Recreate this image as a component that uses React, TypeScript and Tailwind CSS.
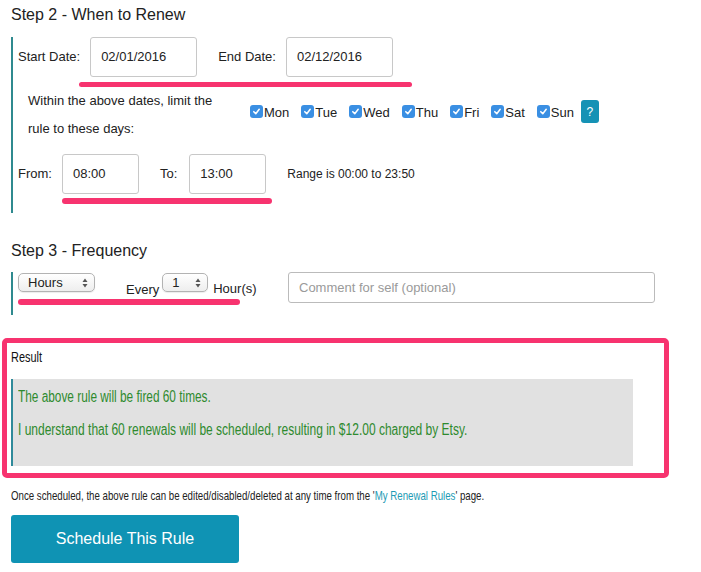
import React from 'react';

const days = ['Mon', 'Tue', 'Wed', 'Thu', 'Fri', 'Sat', 'Sun'];

function Check() {
  return (
    <span className="inline-flex items-center justify-center w-[13px] h-[13px] rounded-[3px] bg-[#3a8fe3] mr-[1px]">
      <svg width="9" height="9" viewBox="0 0 10 10">
        <path d="M2 5.2 L4.2 7.4 L8 2.6" fill="none" stroke="white" strokeWidth="1.7" strokeLinecap="round" strokeLinejoin="round" />
      </svg>
    </span>
  );
}

function Arrows() {
  return (
    <svg width="6" height="10" viewBox="0 0 6 10" className="text-[#555]">
      <path d="M3 0.5 L5.5 4 L0.5 4 Z" fill="currentColor" />
      <path d="M3 9.5 L5.5 6 L0.5 6 Z" fill="currentColor" />
    </svg>
  );
}

function FakeSelect({ value, width }: { value: string; width: string }) {
  return (
    <div className={`${width} shrink-0 h-[19px] flex items-center justify-between pl-[9px] pr-[6px] rounded-[5px] border border-[#b3b3b3] bg-gradient-to-b from-white to-[#eeeeee] text-[13px] text-[#222] shadow-[0_1px_1px_rgba(0,0,0,0.08)]`}>
      <span>{value}</span>
      <Arrows />
    </div>
  );
}

function Underline({ className }: { className: string }) {
  return <div className={`rounded-full bg-[#f7336f] ${className}`} />;
}

export default function App() {
  return (
    <div className="w-[701px] h-[572px] overflow-hidden bg-white text-[#222] font-['Liberation_Sans',Arial,sans-serif]">
      {/* Step 2 */}
      <h2 className="pl-[11px] pt-[5px] text-[16px] leading-[20px] text-[#222]">Step 2 - When to Renew</h2>

      <div className="ml-[11px] mt-[12px] border-l-2 border-[#2f8a8f] pl-[5px] pb-[9px]">
        <div className="flex items-center h-[40px] text-[13px]">
          <span>Start Date:</span>
          <div className="ml-[10px] w-[107px] h-[40px] flex items-center pl-[10px] pb-[1px] border border-[#c8c8c8] rounded-[3px]">02/01/2016</div>
          <span className="ml-[21px]">End Date:</span>
          <div className="ml-[10px] w-[107px] h-[40px] flex items-center pl-[10px] pb-[1px] border border-[#c8c8c8] rounded-[3px]">02/12/2016</div>
        </div>
        <Underline className="ml-[61px] mt-[5px] w-[333px] h-[5px]" />

        <div className="flex items-start">
          <p className="ml-[10px] w-[222px] text-[13px] leading-[28px]">
            Within the above dates, limit the
            <br />
            rule to these days:
          </p>
          <div className="flex items-center mt-[13px]">
            {days.map((d, i) => (
              <label
                key={d}
                className={`flex items-center text-[13px] leading-[16px] ${i === days.length - 1 ? 'mr-[7px]' : 'mr-[12px]'}`}
              >
                <Check />
                <span className="mt-[3px]">{d}</span>
              </label>
            ))}
            <span className="w-[18px] h-[23px] flex items-center justify-center rounded-[3px] bg-[#1592b5] text-white text-[12px]">?</span>
          </div>
        </div>

        <div className="flex items-center h-[40px] mt-[11px] text-[13px]">
          <span>From:</span>
          <div className="ml-[10px] w-[77px] h-[40px] flex items-center pl-[10px] pb-[1px] border border-[#c8c8c8] rounded-[3px]">08:00</div>
          <span className="ml-[21px]">To:</span>
          <div className="ml-[12px] w-[77px] h-[40px] flex items-center pl-[10px] pb-[1px] border border-[#c8c8c8] rounded-[3px]">13:00</div>
          <span className="ml-[21px] text-[12px]">Range is 00:00 to 23:50</span>
        </div>
        <Underline className="ml-[44px] mt-[4px] w-[210px] h-[6px]" />
      </div>

      {/* Step 3 */}
      <h2 className="pl-[11px] mt-[28px] text-[16px] leading-[20px]">Step 3 - Frequency</h2>

      <div className="ml-[11px] mt-[11px] border-l-2 border-[#2f8a8f] pl-[5px] pb-[10px] flex items-start">
        <div className="w-[222px] shrink-0 pt-[1px]">
          <div className="flex items-end whitespace-nowrap">
            <FakeSelect value="Hours" width="w-[77px]" />
            <span className="ml-[31px] mb-[-5px] text-[13px] leading-[14px]">Every</span>
            <div className="ml-[3px] shrink-0">
              <FakeSelect value="1" width="w-[46px]" />
            </div>
            <span className="ml-[5px] mb-[-5px] text-[13px] leading-[16px]">Hour(s)</span>
          </div>
          <Underline className="mt-[7px] w-[222px] h-[6px]" />
        </div>
        <div className="ml-[48px] w-[367px] h-[31px] shrink-0 flex items-center pl-[10px] border border-[#bbbbbb] rounded-[3px] text-[13px] text-[#9a9a9a]">
          Comment for self (optional)
        </div>
      </div>

      {/* Result */}
      <div className="ml-[2px] mt-[23px] w-[667px] border-[5px] border-[#f7336f] rounded-[5px] pl-[4px] pt-[5px] pb-[7px]">
        <div className="text-[14px] leading-[18px] text-[#111] origin-left scale-x-[0.78]">Result</div>
        <div className="mt-[13px] w-[622px] h-[87px] bg-[#e1e1e1] border-l-2 border-[#2f8a9a] pl-[5px] pt-[8px] text-[#2e8a2e] text-[16px] leading-[20px]">
          <p className="whitespace-nowrap origin-left scale-x-[0.74]">The above rule will be fired 60 times.</p>
          <p className="mt-[13px] whitespace-nowrap origin-left scale-x-[0.75]">
            I understand that 60 renewals will be scheduled, resulting in $12.00 charged by Etsy.
          </p>
        </div>
      </div>

      <p className="ml-[11px] mt-[10px] text-[13px] leading-[16px] whitespace-nowrap origin-left scale-x-[0.745]">
        Once scheduled, the above rule can be edited/disabled/deleted at any time from the '
        <a className="text-[#1e9bb5]">My Renewal Rules</a>' page.
      </p>

      <button className="ml-[11px] mt-[11px] w-[228px] h-[48px] rounded-[3px] bg-[#0f93b4] text-white text-[16px]">
        Schedule This Rule
      </button>
    </div>
  );
}
